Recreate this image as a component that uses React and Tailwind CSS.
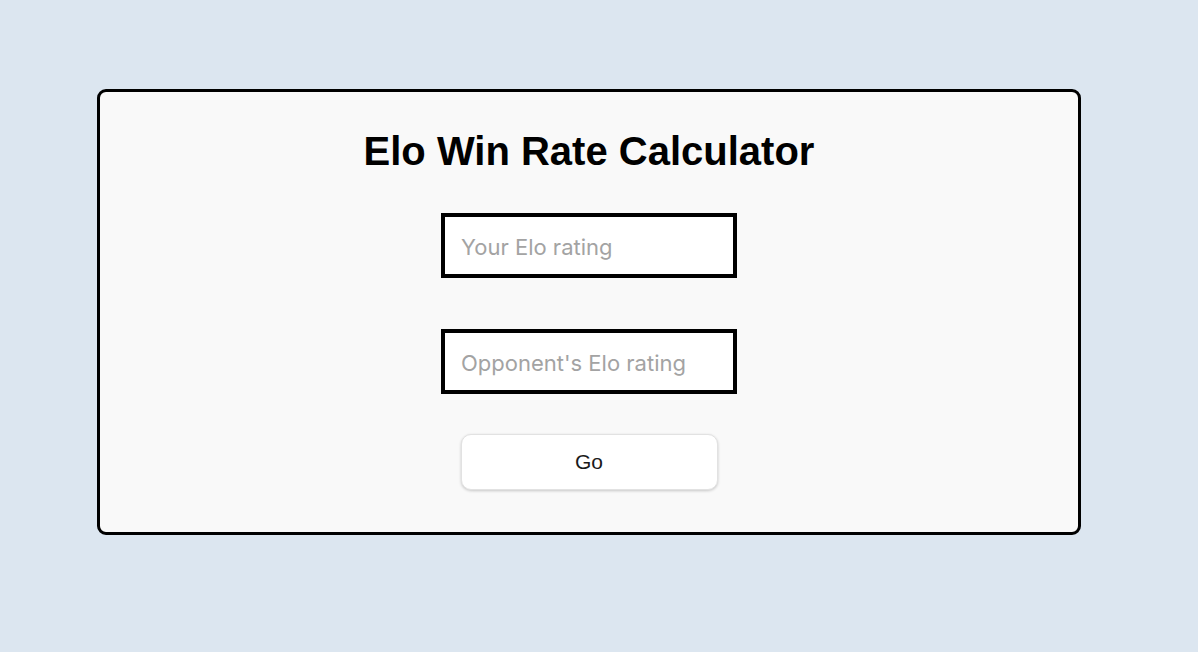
export default function App() {
  return (
    <div className="min-h-[652px] w-full bg-[#dce6f0] pt-[89px]" style={{ fontFamily: '"Liberation Sans", Arial, sans-serif' }}>
      <div className="ml-[97px] w-[984px] h-[446px] rounded-[9px] border-[3px] border-black bg-[#f9f9f9] flex flex-col items-center pt-[36px]">
        <h1 className="text-[40px] font-bold leading-[46px] text-black">Elo Win Rate Calculator</h1>

        <input
          type="text"
          placeholder="Your Elo rating"
          className="mt-[39px] w-[296px] h-[65px] border-[4px] border-black bg-white pl-[16px] pr-[8px] pt-[3px] text-[22px] text-black placeholder:text-[#a3a3a3] outline-none"
          style={{ fontFamily: 'Inter, "Noto Sans", sans-serif' }}
        />

        <input
          type="text"
          placeholder="Opponent's Elo rating"
          className="mt-[51px] w-[296px] h-[65px] border-[4px] border-black bg-white pl-[16px] pr-[8px] pt-[3px] text-[22px] text-black placeholder:text-[#a3a3a3] outline-none"
          style={{ fontFamily: 'Inter, "Noto Sans", sans-serif' }}
        />

        <button className="mt-[40px] w-[257px] h-[56px] rounded-[10px] bg-white border border-[#e2e2e2] shadow-[0_1px_3px_rgba(0,0,0,0.2)] text-[21px] text-[#1a1a1a] cursor-pointer">
          Go
        </button>
      </div>
    </div>
  );
}
